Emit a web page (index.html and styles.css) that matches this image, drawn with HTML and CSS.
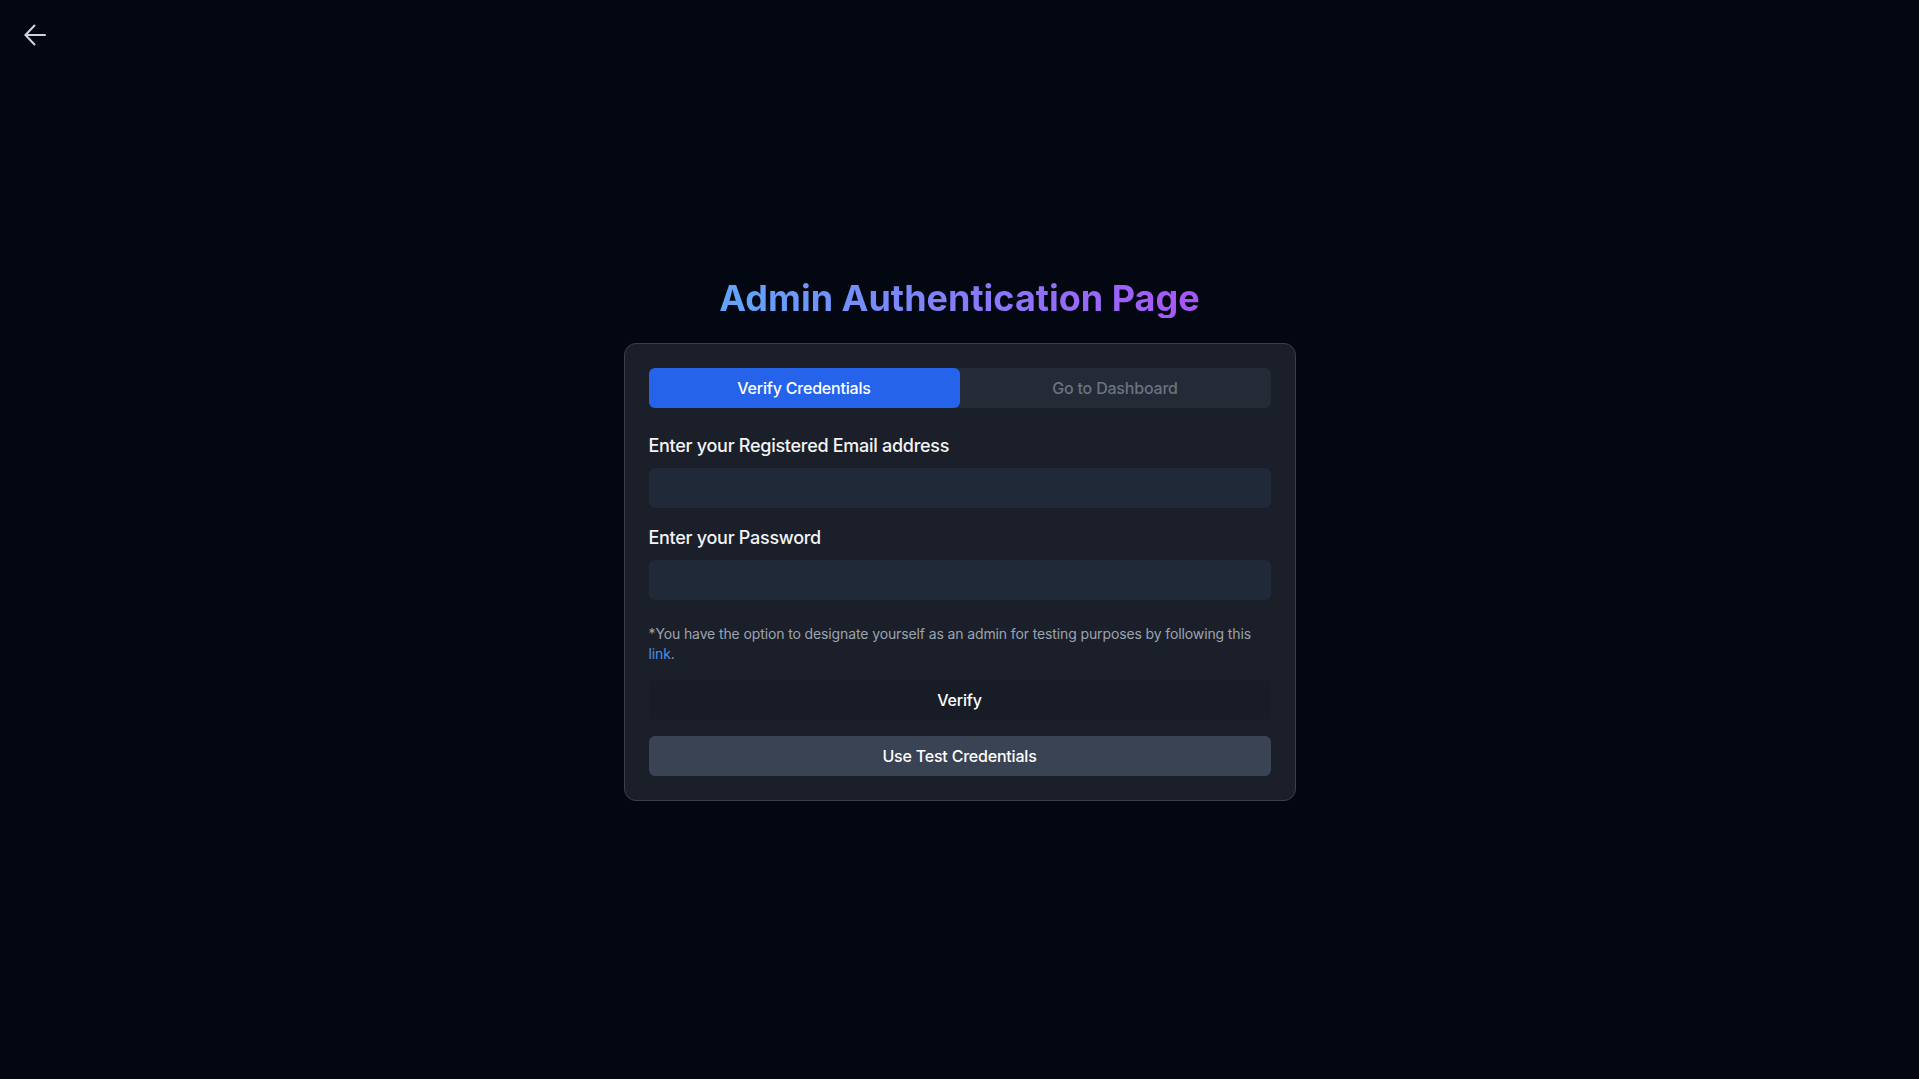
FILE: index.html
```html
<!DOCTYPE html>
<html lang="en">
<head>
<meta charset="utf-8">
<title>Admin Authentication Page</title>
<link rel="stylesheet" href="styles.css">
</head>
<body>
<header class="topbar">
  <a class="back" href="#" aria-label="Back">
    <svg width="22" height="22" viewBox="0 0 22 22" fill="none" stroke="currentColor" stroke-width="2" stroke-linecap="round" stroke-linejoin="round">
      <path d="M21 11H1.5"/>
      <path d="M10.5 1.5 1.5 11l9 9.5"/>
    </svg>
  </a>
</header>
<main class="main">
  <h1 class="title">Admin Authentication Page</h1>
  <section class="card">
    <div class="tabs">
      <button class="tab tab-active">Verify Credentials</button>
      <button class="tab">Go to Dashboard</button>
    </div>
    <div class="field">
      <label class="label" for="email">Enter your Registered Email address</label>
      <input class="input" id="email" type="email">
    </div>
    <div class="field">
      <label class="label" for="pw">Enter your Password</label>
      <input class="input" id="pw" type="password">
    </div>
    <p class="note">*You have the option to designate yourself as an admin for testing purposes by following this <a class="link" href="#">link</a>.</p>
    <button class="btn btn-verify">Verify</button>
    <button class="btn btn-test">Use Test Credentials</button>
  </section>
</main>
</body>
</html>
```
FILE: styles.css
```css
* { box-sizing: border-box; }
html, body { margin: 0; padding: 0; }
body {
  background: #030712;
  color: #f3f4f6;
  font-family: Inter, "Noto Sans", sans-serif;
  min-height: 1079px;
}
.topbar {
  padding: 24px 0 0 24px;
  height: 70px;
}
.back {
  display: inline-block;
  color: #d1d5db;
  width: 22px;
  height: 22px;
}
.back svg { display: block; }
.main {
  display: flex;
  flex-direction: column;
  align-items: center;
  padding-top: 208px;
}
.title {
  margin: 0 0 25px;
  font-size: 36px;
  line-height: 40px;
  font-weight: 700;
  letter-spacing: 0;
  background: linear-gradient(90deg, #60a5fa 0%, #a855f7 100%);
  -webkit-background-clip: text;
  background-clip: text;
  color: transparent;
}
.card {
  width: 672px;
  background: #1b1f2a;
  border: 1px solid #3a3f4b;
  border-radius: 12px;
  padding: 24px;
  display: flex;
  flex-direction: column;
}
.tabs {
  display: grid;
  grid-template-columns: 1fr 1fr;
  background: #252a37;
  border-radius: 6px;
  height: 40px;
}
.tab {
  border: 0;
  background: transparent;
  color: #6b7280;
  font-family: inherit;
  font-size: 16px;
  font-weight: 500;
  letter-spacing: -0.2px;
  border-radius: 6px;
  cursor: pointer;
}
.tab-active {
  background: #2563eb;
  color: #ffffff;
}
.field {
  margin-top: 24px;
  display: flex;
  flex-direction: column;
}
.field + .field { margin-top: 16px; }
.label {
  font-size: 18px;
  line-height: 28px;
  font-weight: 500;
  letter-spacing: -0.28px;
  color: #f3f4f6;
  margin-bottom: 8px;
}
.input {
  height: 40px;
  border: 0;
  border-radius: 6px;
  background: #202938;
  color: #f3f4f6;
  font-family: inherit;
  font-size: 16px;
  padding: 0 12px;
  outline: none;
}
.note {
  margin: 24px 0 16px;
  font-size: 14px;
  line-height: 20px;
  letter-spacing: -0.12px;
  color: #9ca3af;
}
.link { color: #4a8fe8; text-decoration: none; }
.btn {
  height: 40px;
  border: 0;
  border-radius: 6px;
  font-family: inherit;
  font-size: 16px;
  font-weight: 500;
  letter-spacing: -0.2px;
  color: #ffffff;
  cursor: pointer;
}
.btn-verify { background: #171c27; }
.btn-test { background: #3a4354; margin-top: 16px; }
```
